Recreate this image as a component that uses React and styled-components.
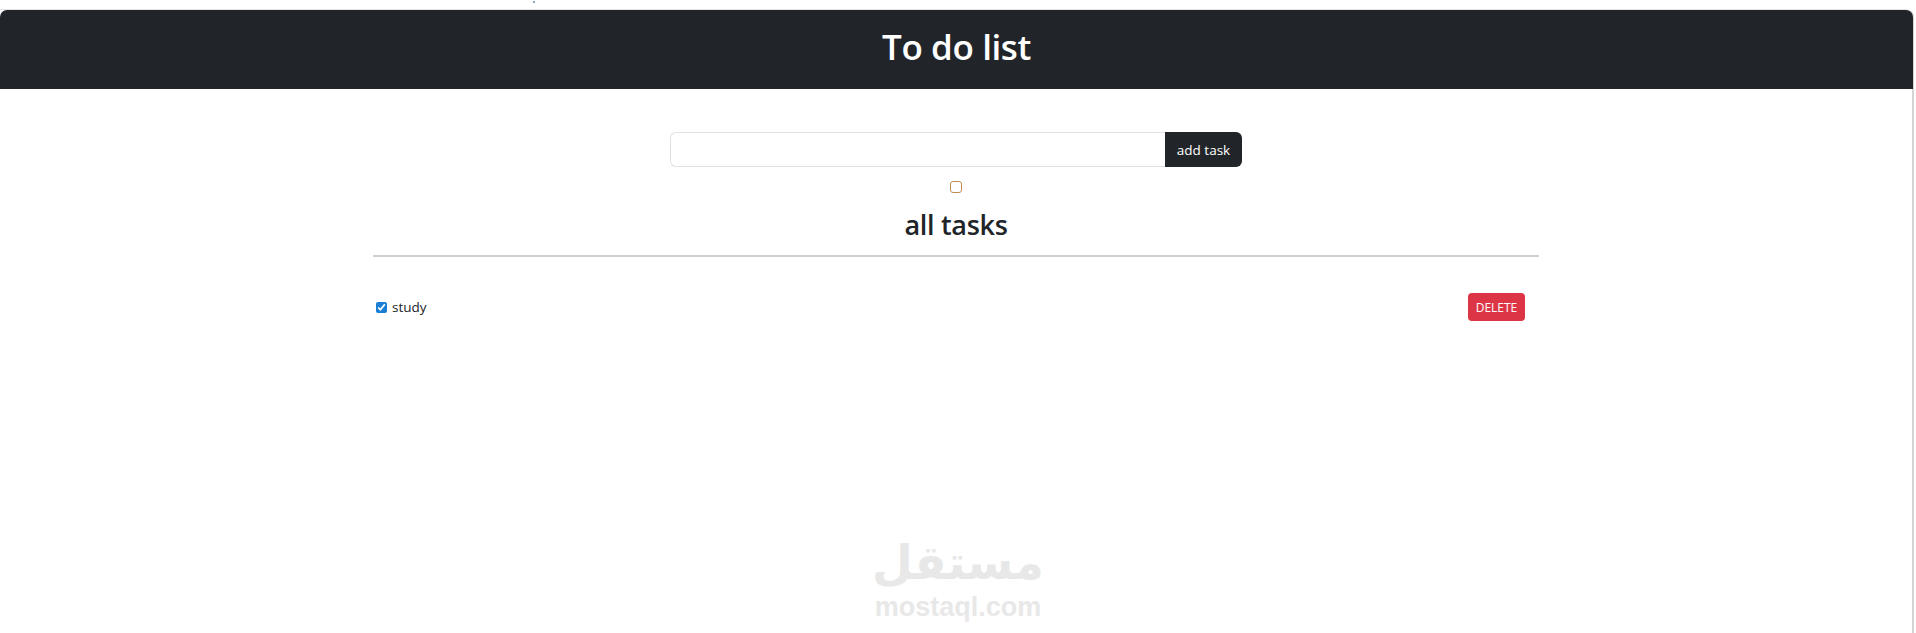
import React from 'react';
import styled, { createGlobalStyle } from 'styled-components';

const GlobalStyle = createGlobalStyle`
  html, body {
    margin: 0;
    padding: 0;
    height: 100%;
    overflow: hidden;
    background: #fff;
    font-family: "Open Sans", "Noto Sans", "Liberation Sans", sans-serif;
    color: #212529;
  }
`;

const Page = styled.div`
  position: relative;
  box-sizing: border-box;
  width: 1916px;
  height: 633px;
  padding: 9px 2px 0 0;
  overflow: hidden;
`;

const Frame = styled.div`
  box-sizing: border-box;
  height: 100%;
  border-top: 1px solid #e4e4e4;
  border-right: 2px solid #d4d4d4;
  border-top-right-radius: 8px;
`;

const Header = styled.header`
  display: flex;
  align-items: center;
  justify-content: center;
  box-sizing: border-box;
  height: 79px;
  padding-bottom: 6px;
  background: #212529;
  border-radius: 7px 7px 0 0;
  margin-right: -1px;
`;

const Title = styled.h1`
  margin: 0;
  font-size: 35px;
  font-weight: 600;
  letter-spacing: -0.4px;
  color: #fff;
`;

const Main = styled.main`
  display: flex;
  flex-direction: column;
  align-items: center;
  padding-top: 43px;
`;

const TaskForm = styled.form`
  display: flex;
  width: 574px;
  height: 35px;
  padding-right: 1px;
  box-sizing: border-box;
`;

const TaskInput = styled.input`
  flex: 1;
  min-width: 0;
  box-sizing: border-box;
  margin-left: 1px;
  border: 1px solid #dee2e6;
  border-right: none;
  border-radius: 6px 0 0 6px;
  outline: none;
`;

const AddButton = styled.button`
  width: 77px;
  border: none;
  border-radius: 0 6px 6px 0;
  background: #212529;
  color: #fff;
  font-family: inherit;
  font-size: 13.5px;
  padding: 0;
`;

const NewTaskCheck = styled.input`
  appearance: none;
  box-sizing: border-box;
  display: block;
  width: 12px;
  height: 12px;
  margin: 14px 0 0;
  border: 1px solid #c08c50;
  border-radius: 3px;
  background: #fff;
`;

const SectionTitle = styled.h2`
  margin: 13px 0 0;
  font-size: 27px;
  line-height: 38px;
  font-weight: 600;
  letter-spacing: -0.3px;
`;

const Divider = styled.hr`
  width: 1166px;
  height: 2px;
  margin: 11px 0 0;
  border: none;
  background: #cfcfcf;
`;

const TaskList = styled.ul`
  width: 1166px;
  margin: 0;
  padding: 36px 14px 0 3px;
  box-sizing: border-box;
  list-style: none;
`;

const TaskRow = styled.li`
  display: flex;
  align-items: center;
  justify-content: space-between;
  height: 28px;
`;

const TaskLabel = styled.label`
  display: flex;
  align-items: center;
  gap: 5px;
  font-size: 13.5px;
`;

const TaskCheck = styled.input`
  width: 11px;
  height: 11px;
  margin: 0;
  accent-color: #1a7fd4;
`;

const DeleteButton = styled.button`
  width: 57px;
  height: 28px;
  padding: 0;
  border: none;
  border-radius: 4px;
  background: #dc3545;
  color: #fff;
  font-family: inherit;
  font-size: 12px;
  text-transform: uppercase;
`;

const Watermark = styled.div`
  position: absolute;
  left: 874px;
  top: 534px;
  width: 168px;
  display: flex;
  flex-direction: column;
  align-items: center;
  color: #e8e8e8;
  font-weight: 700;
  pointer-events: none;
`;

const WatermarkArabic = styled.span`
  font-family: "DejaVu Sans", sans-serif;
  font-size: 47px;
  line-height: 58px;
`;

const WatermarkLatin = styled.span`
  font-family: "Liberation Sans", Arial, sans-serif;
  font-size: 27px;
  line-height: 30px;
`;

const StrayDot = styled.span`
  position: absolute;
  left: 533px;
  top: 1px;
  width: 2px;
  height: 2px;
  background: #7fa8cc;
`;

const App = () => (
  <Page>
    <GlobalStyle />
    <StrayDot />
    <Frame>
      <Header>
        <Title>To do list</Title>
      </Header>
      <Main>
        <TaskForm onSubmit={e => e.preventDefault()}>
          <TaskInput type="text" />
          <AddButton type="submit">add task</AddButton>
        </TaskForm>
        <NewTaskCheck type="checkbox" />
        <SectionTitle>all tasks</SectionTitle>
        <Divider />
        <TaskList>
          <TaskRow>
            <TaskLabel>
              <TaskCheck type="checkbox" defaultChecked />
              study
            </TaskLabel>
            <DeleteButton type="button">delete</DeleteButton>
          </TaskRow>
        </TaskList>
      </Main>
    </Frame>
    <Watermark>
      <WatermarkArabic dir="rtl">مستقل</WatermarkArabic>
      <WatermarkLatin>mostaql.com</WatermarkLatin>
    </Watermark>
  </Page>
);

export default App;
